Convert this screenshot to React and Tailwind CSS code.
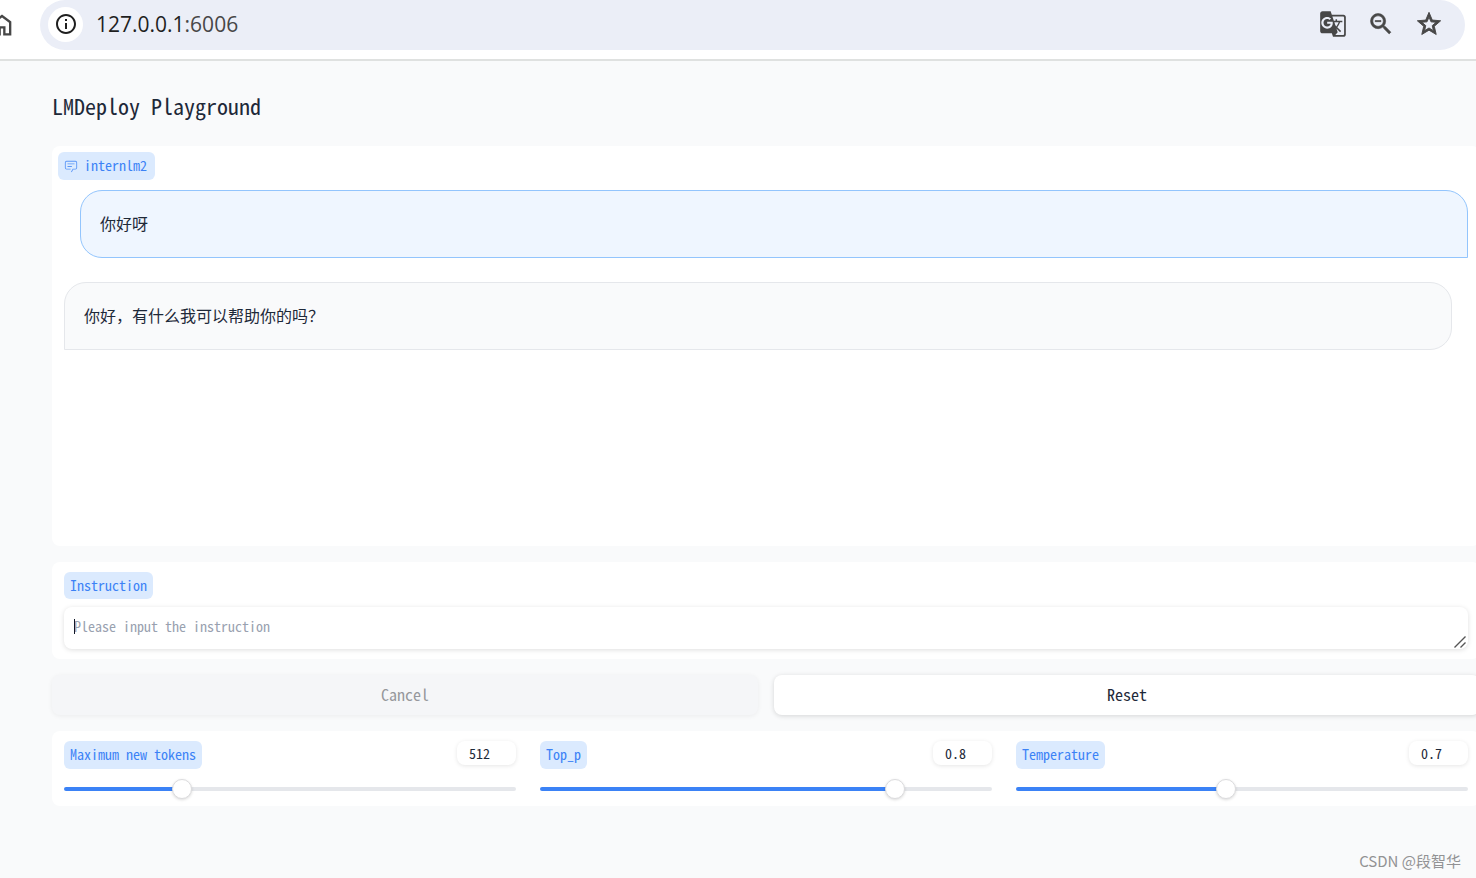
import { useState } from "react";
import { MdGTranslate, MdInfoOutline, MdStarOutline } from "react-icons/md";

const messages = [
  { id: 1, from: "user", text: "你好呀" },
  { id: 2, from: "bot", text: "你好，有什么我可以帮助你的吗？" },
];

const sliders = [
  { id: "max-tokens", label: "Maximum new tokens", min: 1, max: 2048, step: 1, initial: 512 },
  { id: "top-p", label: "Top_p", min: 0.01, max: 1, step: 0.01, initial: 0.8 },
  { id: "temperature", label: "Temperature", min: 0.01, max: 1.5, step: 0.01, initial: 0.7 },
];

const HomeIcon = () => (
  <svg viewBox="0 -960 960 960" fill="currentColor" className="w-7 h-7">
    <path d="M240-200h120v-240h240v240h120v-360L480-740 240-560v360Zm-80 80v-480l320-240 320 240v480H520v-240h-80v240H160Z" />
  </svg>
);

const ZoomOutIcon = () => (
  <svg viewBox="0 0 24 24" fill="currentColor" stroke="currentColor" strokeWidth="0.5" className="w-7 h-7">
    <path d="M15.5 14h-.79l-.28-.27A6.471 6.471 0 0 0 16 9.5 6.5 6.5 0 1 0 9.5 16c1.61 0 3.09-.59 4.23-1.57l.27.28v.79l5 4.99L20.49 19l-4.99-5zm-6 0C7.01 14 5 11.99 5 9.5S7.01 5 9.5 5 14 7.01 14 9.5 11.99 14 9.5 14zM7 9h5v1H7z" />
  </svg>
);

const ChatIcon = () => (
  <svg viewBox="0 0 32 32" fill="currentColor" className="w-3.5 h-3.5 opacity-80">
    <path d="M17.74 30L16 29l4-7h6a2 2 0 0 0 2-2V8a2 2 0 0 0-2-2H6a2 2 0 0 0-2 2v12a2 2 0 0 0 2 2h9v2H6a4 4 0 0 1-4-4V8a4 4 0 0 1 4-4h20a4 4 0 0 1 4 4v12a4 4 0 0 1-4 4h-4.84Z" />
    <path d="M8 10h16v2H8zm0 6h10v2H8z" />
  </svg>
);

const AddressBar = () => (
  <header className="flex items-center h-[61px] pb-[9px] pr-[11px] bg-white border-b-2 border-[#dfe1e0] text-[#474747]">
    <button aria-label="Home" className="-ml-3 mr-6"><HomeIcon /></button>
    <div className="flex-1 flex items-center h-[50px] pb-0.5 pl-2 pr-[22px] rounded-full bg-[#ebeef7]">
      <button aria-label="Site information" className="w-[35px] h-[35px] rounded-full bg-white flex items-center justify-center text-[#1f1f1f]">
        <MdInfoOutline className="w-6 h-6" />
      </button>
      <p className="flex-1 ml-[13px] text-[21px] leading-7 font-['Open_Sans',sans-serif]">
        <span className="text-[#1f1f1f]">127.0.0.1</span>:6006
      </p>
      <div className="flex items-center gap-5">
        <button aria-label="Translate this page"><MdGTranslate className="w-7 h-7" /></button>
        <button aria-label="Zoom out"><ZoomOutIcon /></button>
        <button aria-label="Bookmark"><MdStarOutline className="w-7 h-7" strokeWidth="0.8" stroke="currentColor" /></button>
      </div>
    </div>
  </header>
);

const SliderField = ({ id, label, min, max, step, initial }) => {
  const [value, setValue] = useState(initial);
  const fill = ((value - min) / (max - min)) * 100;

  return (
    <div>
      <div className="flex items-start justify-between">
        <label htmlFor={id} className="h-7 px-1.5 rounded-md bg-blue-100 text-[14px] leading-[26px] text-[#3b82f6]">{label}</label>
        <input
          type="number"
          aria-label={`${label} value`}
          min={min}
          max={max}
          step={step}
          value={value}
          onChange={(e) => setValue(e.target.value)}
          className="w-[59px] h-6 pl-3 rounded-lg bg-white text-[14px] text-gray-800 shadow-[0_1px_4px_rgba(0,0,0,0.1)] focus:outline-none"
        />
      </div>
      <input
        id={id}
        type="range"
        min={min}
        max={max}
        step={step}
        value={value}
        onChange={(e) => setValue(e.target.value)}
        style={{ "--fill": `${fill}%` }}
        className="block w-full h-5 mt-2.5 appearance-none bg-transparent [&::-webkit-slider-runnable-track]:h-1 [&::-webkit-slider-runnable-track]:rounded-full [&::-webkit-slider-runnable-track]:bg-[linear-gradient(to_right,#3b82f6_var(--fill),#e5e7eb_var(--fill))] [&::-webkit-slider-thumb]:appearance-none [&::-webkit-slider-thumb]:w-5 [&::-webkit-slider-thumb]:h-5 [&::-webkit-slider-thumb]:-mt-2 [&::-webkit-slider-thumb]:rounded-full [&::-webkit-slider-thumb]:bg-white [&::-webkit-slider-thumb]:border [&::-webkit-slider-thumb]:border-[#dcdcde] [&::-webkit-slider-thumb]:shadow-[0_1px_3px_rgba(0,0,0,0.15)]"
      />
    </div>
  );
};

const App = () => {
  const [input, setInput] = useState("");

  return (
    <div className="relative min-h-screen overflow-x-hidden bg-gray-50 text-gray-800 font-['Noto_Sans_Mono_CJK_SC','Liberation_Mono',monospace]">
      <AddressBar />

      <main className="ml-[52px] -mr-1 pt-[30px] pb-[72px]">
        <h1 className="text-[22px] leading-7 font-medium">LMDeploy Playground</h1>

        <div className="mt-[27px] space-y-4">
          {/* Chat */}
          <section className="min-h-[400px] p-1.5 rounded-lg bg-white">
            <div className="inline-flex items-center gap-1.5 h-7 pl-1.5 pr-2 rounded-md bg-blue-100 text-[14px] leading-[26px] text-[#3b82f6]">
              <ChatIcon />
              <span className="h-7">internlm2</span>
            </div>
            <div className="mt-2.5 px-1.5 space-y-6 text-[16px] leading-6 font-['Noto_Sans_CJK_SC',sans-serif]">
              {messages.map((msg) => (
                <div
                  key={msg.id}
                  className={`px-[19px] pt-5 pb-[22px] border rounded-[22px] ${
                    msg.from === "user"
                      ? "ml-4 rounded-br-none bg-[#eff6ff] border-[#93c5fd]"
                      : "mr-4 rounded-bl-none bg-[#f9fafb] border-[#e5e7eb]"
                  }`}
                >
                  {msg.text}
                </div>
              ))}
            </div>
          </section>

          {/* Instruction */}
          <section className="px-3 py-2.5 rounded-lg bg-white">
            <label htmlFor="instruction" className="inline-block align-top h-[27px] px-1.5 rounded-md bg-blue-100 text-[14px] leading-[26px] text-[#3b82f6]">Instruction</label>
            <div className="relative mt-2">
              <textarea
                id="instruction"
                rows={1}
                value={input}
                onChange={(e) => setInput(e.target.value)}
                placeholder="Please input the instruction"
                className="block w-full h-[42px] px-2.5 py-2 resize-none rounded-lg bg-white text-[14px] leading-[22px] placeholder:text-gray-400 shadow-[0_1px_5px_rgba(0,0,0,0.13)] focus:outline-none"
              />
              {!input && <span className="absolute left-2.5 top-3 w-px h-[15px] bg-gray-900" />}
              <svg viewBox="0 0 12 12" stroke="#555" strokeWidth="1.4" className="absolute right-0.5 bottom-px w-3 h-3 pointer-events-none">
                <path d="M0.5 11.5L11.5 0.5M6.5 11.5L11.5 6.5" />
              </svg>
            </div>
          </section>

          <div className="grid grid-cols-2 gap-4 text-[16px]">
            <button disabled className="h-10 pb-0.5 rounded-lg bg-[#f5f6f8] text-[#96989c] shadow-[0_1px_5px_rgba(0,0,0,0.06)]">Cancel</button>
            <button onClick={() => setInput("")} className="h-10 pb-0.5 rounded-lg bg-white shadow-[0_1px_5px_rgba(0,0,0,0.15)]">Reset</button>
          </div>

          {/* Sampling parameters */}
          <section className="grid grid-cols-3 gap-6 px-3 pt-2.5 pb-[7px] rounded-lg bg-white">
            {sliders.map((s) => <SliderField key={s.id} {...s} />)}
          </section>
        </div>
      </main>

      <p className="absolute right-[15px] bottom-[7px] text-[15px] leading-5 text-[#929294] font-['Noto_Sans_CJK_SC',sans-serif]">CSDN @段智华</p>
    </div>
  );
};

export default App;
